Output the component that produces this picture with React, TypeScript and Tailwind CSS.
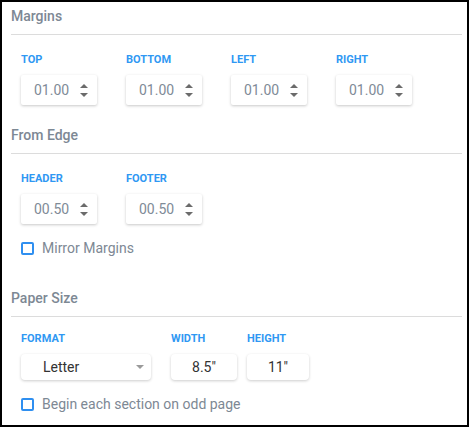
const font = { fontFamily: "Roboto, 'Liberation Sans', sans-serif" };

function SectionHeading({ children }: { children: React.ReactNode }) {
  return (
    <div className="border-b border-[#dcdcdc] pb-[10px] text-[14px] font-medium leading-[16px] text-[#7d8894]">
      {children}
    </div>
  );
}

function FieldLabel({ children }: { children: React.ReactNode }) {
  return (
    <div className="text-[11px] font-bold leading-[12px] text-[#2f98f3]">{children}</div>
  );
}

function Spinner() {
  return (
    <svg width="8" height="13" viewBox="0 0 8 13" className="block">
      <path d="M0 4 L4 0 L8 4 Z" fill="#6b6b6b" />
      <path d="M0 9 L8 9 L4 13 Z" fill="#6b6b6b" />
    </svg>
  );
}

function NumberField({ label, value }: { label: string; value: string }) {
  return (
    <div className="flex w-[105px] flex-col gap-[9px]">
      <FieldLabel>{label}</FieldLabel>
      <div className="flex h-[30px] w-[76px] items-center justify-between rounded-[2px] bg-white pl-[13px] pr-[9px] shadow-[0_1px_3px_rgba(0,0,0,0.22)]">
        <span className="text-[14px] leading-none text-[#808b97]">{value}</span>
        <Spinner />
      </div>
    </div>
  );
}

function Checkbox({ label }: { label: string }) {
  return (
    <div className="flex h-[16px] items-center gap-[8px]">
      <span className="box-border block h-[13px] w-[13px] rounded-[2px] border-2 border-[#2f8ff0]" />
      <span className="text-[14px] leading-[16px] text-[#7d8894]">{label}</span>
    </div>
  );
}

export default function App() {
  return (
    <div style={font} className="box-border h-[427px] w-[469px] border-2 border-black bg-white pl-[9px] pr-[5px] pt-[6px]">
      <SectionHeading>Margins</SectionHeading>
      <div className="mt-[19px] flex pl-[10px]">
        <NumberField label="TOP" value="01.00" />
        <NumberField label="BOTTOM" value="01.00" />
        <NumberField label="LEFT" value="01.00" />
        <NumberField label="RIGHT" value="01.00" />
      </div>

      <div className="mt-[22px]">
        <SectionHeading>From Edge</SectionHeading>
      </div>
      <div className="mt-[19px] flex pl-[10px]">
        <NumberField label="HEADER" value="00.50" />
        <NumberField label="FOOTER" value="00.50" />
      </div>
      <div className="mt-[16px] pl-[10px]">
        <Checkbox label="Mirror Margins" />
      </div>

      <div className="mt-[34px]">
        <SectionHeading>Paper Size</SectionHeading>
      </div>
      <div className="mt-[16px] flex pl-[10px]">
        <div className="flex w-[150px] flex-col gap-[9px]">
          <FieldLabel>FORMAT</FieldLabel>
          <div className="flex h-[26px] w-[130px] items-center justify-between rounded-[4px] bg-white pl-[22px] pr-[7px] shadow-[0_1px_3px_rgba(0,0,0,0.2)]">
            <span className="text-[14px] leading-none text-[#333]">Letter</span>
            <svg width="8" height="4" viewBox="0 0 8 4" className="block">
              <path d="M0 0 L8 0 L4 4 Z" fill="#9a9a9a" />
            </svg>
          </div>
        </div>
        <div className="flex w-[76px] flex-col gap-[9px]">
          <FieldLabel>WIDTH</FieldLabel>
          <div className="flex h-[26px] w-[66px] items-center justify-center rounded-[4px] bg-white shadow-[0_1px_3px_rgba(0,0,0,0.2)]">
            <span className="text-[14px] leading-none text-[#333]">8.5"</span>
          </div>
        </div>
        <div className="flex w-[62px] flex-col gap-[9px]">
          <FieldLabel>HEIGHT</FieldLabel>
          <div className="flex h-[26px] w-[62px] items-center justify-center rounded-[4px] bg-white shadow-[0_1px_3px_rgba(0,0,0,0.2)]">
            <span className="text-[14px] leading-none text-[#333]">11"</span>
          </div>
        </div>
      </div>
      <div className="mt-[16px] pl-[10px]">
        <Checkbox label="Begin each section on odd page" />
      </div>
    </div>
  );
}
